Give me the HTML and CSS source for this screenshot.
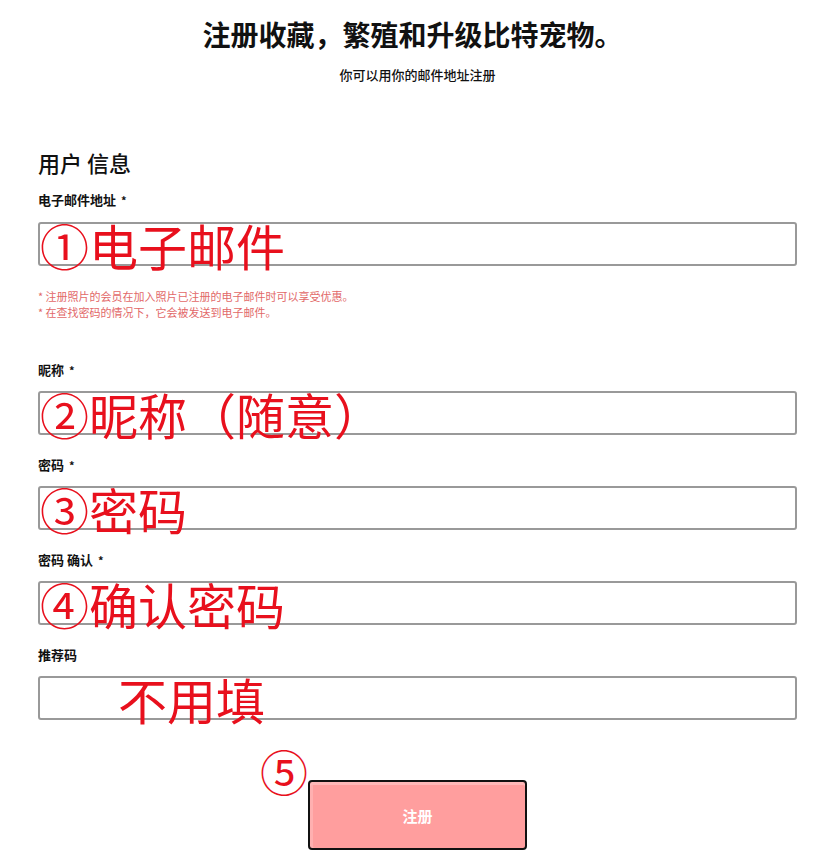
FILE: index.html
```html
<!DOCTYPE html>
<html lang="zh-CN">
<head>
<meta charset="utf-8">
<title>注册</title>
<link rel="stylesheet" href="styles.css">
</head>
<body>
<div class="page">
  <h1 class="title">注册收藏，繁殖和升级比特宠物。</h1>
  <p class="subtitle">你可以用你的邮件地址注册</p>

  <form class="form">
    <h2 class="section">用户 信息</h2>

    <div class="field">
      <label class="label">电子邮件地址 <span class="req">*</span></label>
      <div class="box">
        <input class="input" type="text">
        <span class="note-red">①电子邮件</span>
      </div>
    </div>

    <ul class="hints">
      <li>* 注册照片的会员在加入照片已注册的电子邮件时可以享受优惠。</li>
      <li>* 在查找密码的情况下，它会被发送到电子邮件。</li>
    </ul>

    <div class="field field-2">
      <label class="label">昵称 <span class="req">*</span></label>
      <div class="box">
        <input class="input" type="text">
        <span class="note-red">②昵称（随意）</span>
      </div>
    </div>

    <div class="field">
      <label class="label">密码 <span class="req">*</span></label>
      <div class="box">
        <input class="input" type="password">
        <span class="note-red">③密码</span>
      </div>
    </div>

    <div class="field">
      <label class="label">密码 确认 <span class="req">*</span></label>
      <div class="box">
        <input class="input" type="password">
        <span class="note-red">④确认密码</span>
      </div>
    </div>

    <div class="field">
      <label class="label">推荐码</label>
      <div class="box">
        <input class="input" type="text">
        <span class="note-red note-skip">不用填</span>
      </div>
    </div>

    <div class="actions">
      <div class="btn-wrap">
        <span class="note-red note-five">⑤</span>
        <button class="btn" type="button">注册</button>
      </div>
    </div>
  </form>
</div>
</body>
</html>
```

FILE: styles.css
```css
* { box-sizing: border-box; }

html, body {
  margin: 0;
  padding: 0;
  background: #ffffff;
}

body {
  font-family: "Noto Sans CJK SC", "Noto Sans", "Liberation Sans", sans-serif;
  color: #111;
}

.page {
  width: 821px;
  padding: 14px 24px 0 38px;
}

.title {
  margin: 0 0 0 -10px;
  font-size: 28px;
  line-height: 40px;
  font-weight: 700;
  text-align: center;
  color: #111;
}

.subtitle {
  margin: 13px 0 0;
  font-size: 13px;
  line-height: 16px;
  font-weight: 500;
  text-align: center;
  color: #111;
}

.form {
  margin: 0;
}

.section {
  margin: 66px 0 0;
  font-size: 22px;
  line-height: 26px;
  font-weight: 500;
  color: #111;
}

.field {
  margin-top: 22px;
}

.section + .field {
  margin-top: 17px;
}

.field-2 {
  margin-top: 42px;
}

.label {
  display: block;
  font-size: 13px;
  line-height: 16px;
  font-weight: 700;
  color: #111;
}

.req {
  font-size: 11px;
  margin-left: 2px;
}

.box {
  position: relative;
  margin-top: 13px;
  height: 44px;
}

.section + .field .box {
  margin-top: 14px;
}

.input {
  display: block;
  width: 100%;
  height: 44px;
  margin: 0;
  border: 2px solid #999999;
  border-radius: 3px;
  background: #ffffff;
  font-size: 14px;
  padding: 0 10px;
}

.note-red {
  position: absolute;
  left: 2px;
  top: 0;
  font-family: "Noto Sans CJK SC", sans-serif;
  font-size: 49px;
  line-height: 46px;
  font-weight: 400;
  color: #e8101d;
  white-space: nowrap;
  pointer-events: none;
}

.note-skip {
  left: 80px;
}

.hints {
  list-style: none;
  margin: 22px 0 0;
  padding: 0;
}

.hints li {
  font-size: 11px;
  line-height: 16px;
  color: #e26868;
}

.actions {
  display: flex;
  justify-content: center;
  margin-top: 60px;
  padding-bottom: 7px;
}

.btn-wrap {
  position: relative;
}

.note-five {
  left: -48px;
  top: -34px;
  font-size: 48px;
  line-height: 48px;
}

.btn {
  display: block;
  width: 219px;
  height: 70px;
  border: 2px solid #111;
  border-radius: 4px;
  background: #ff9e9e;
  box-shadow: inset 0 3px 0 #ffb8b8, inset 3px 0 0 #ffb0b0;
  color: #ffffff;
  font-family: "Noto Sans CJK SC", sans-serif;
  font-size: 15px;
  font-weight: 700;
  cursor: pointer;
}
```
